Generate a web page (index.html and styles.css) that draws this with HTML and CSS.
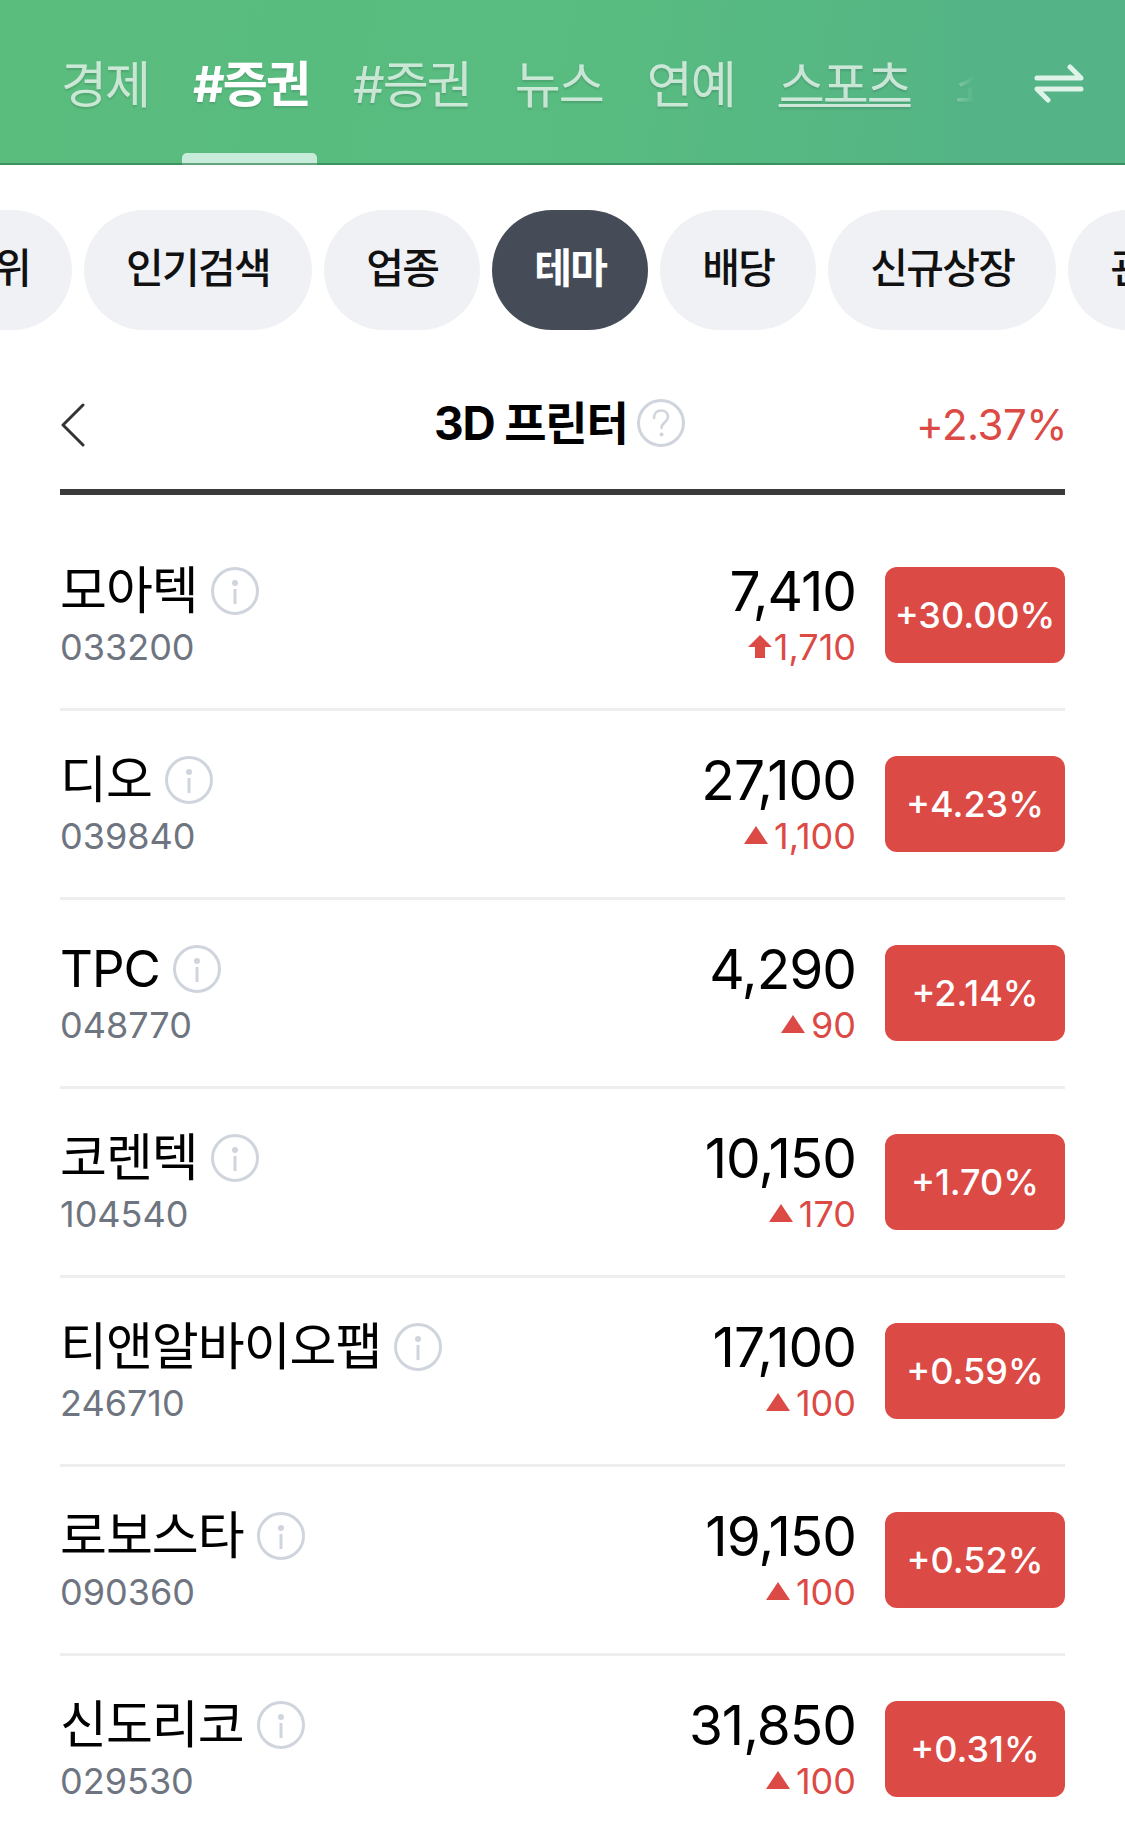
FILE: index.html
```html
<!DOCTYPE html>
<html lang="ko">
<head>
<meta charset="utf-8">
<title>3D 프린터</title>
<link rel="stylesheet" href="styles.css">
</head>
<body>
<header class="gnb">
  <nav class="gnb-tabs">
    <span class="gnb-tab">경제</span>
    <span class="gnb-tab is-active">#증권</span>
    <span class="gnb-tab">#증권</span>
    <span class="gnb-tab">뉴스</span>
    <span class="gnb-tab">연예</span>
    <span class="gnb-tab is-under">스포츠</span>
    <span class="gnb-tab">쇼핑</span>
  </nav>
  <div class="gnb-fade"></div>
  <svg class="gnb-swap" viewBox="0 0 50 40" width="50" height="40" aria-hidden="true">
    <path d="M3 15H47L36 4M47 26H3L14 37" fill="none" stroke="#dff3e8" stroke-width="5" stroke-linecap="round" stroke-linejoin="round"/>
  </svg>
</header>

<div class="pills">
  <span class="pill pill-cut">순위</span>
  <span class="pill">인기검색</span>
  <span class="pill">업종</span>
  <span class="pill is-on">테마</span>
  <span class="pill">배당</span>
  <span class="pill">신규상장</span>
  <span class="pill">관리종목</span>
</div>

<main class="panel">
  <div class="title-row">
    <svg class="back" viewBox="0 0 26 44" width="26" height="44" aria-hidden="true">
      <path d="M23 2L3 22L23 42" fill="none" stroke="#333" stroke-width="3" stroke-linecap="round" stroke-linejoin="round"/>
    </svg>
    <h1 class="title"><span>3D 프린터</span>
      <svg class="help" viewBox="0 0 48 48" width="48" height="48" aria-hidden="true">
        <circle cx="24" cy="24" r="22.5" fill="none" stroke="#d0d5dd" stroke-width="3"/>
        <path d="M17 19c0-5 3-7.500 7-7.500s7 2.500 7 6.500c0 5-6.500 5.500-6.500 11" fill="none" stroke="#d0d5dd" stroke-width="2.600" stroke-linecap="round"/>
        <circle cx="24.500" cy="35.500" r="2" fill="#d0d5dd"/>
      </svg>
    </h1>
    <span class="title-rate">+2.37%</span>
  </div>

  <ul class="stocks">
    <li class="stock">
      <div class="stock-main">
        <div class="stock-name"><span>모아텍</span><svg class="info" viewBox="0 0 48 48" width="48" height="48"><use href="#i"/></svg></div>
        <div class="stock-code">033200</div>
      </div>
      <div class="stock-price">
        <div class="price">7,410</div>
        <div class="delta"><svg class="arrow" viewBox="0 0 24 24" width="24" height="24"><path d="M12 1L24 13H17V24H7V13H0Z" fill="#dc4a45"/></svg>1,710</div>
      </div>
      <div class="badge">+30.00%</div>
    </li>
    <li class="stock">
      <div class="stock-main">
        <div class="stock-name"><span>디오</span><svg class="info" viewBox="0 0 48 48" width="48" height="48"><use href="#i"/></svg></div>
        <div class="stock-code">039840</div>
      </div>
      <div class="stock-price">
        <div class="price">27,100</div>
        <div class="delta delta-tri"><svg class="arrow" viewBox="0 0 24 18" width="24" height="18"><path d="M12 0L24 18H0Z" fill="#dc4a45"/></svg>1,100</div>
      </div>
      <div class="badge">+4.23%</div>
    </li>
    <li class="stock">
      <div class="stock-main">
        <div class="stock-name"><span>TPC</span><svg class="info" viewBox="0 0 48 48" width="48" height="48"><use href="#i"/></svg></div>
        <div class="stock-code">048770</div>
      </div>
      <div class="stock-price">
        <div class="price">4,290</div>
        <div class="delta delta-tri"><svg class="arrow" viewBox="0 0 24 18" width="24" height="18"><path d="M12 0L24 18H0Z" fill="#dc4a45"/></svg>90</div>
      </div>
      <div class="badge">+2.14%</div>
    </li>
    <li class="stock">
      <div class="stock-main">
        <div class="stock-name"><span>코렌텍</span><svg class="info" viewBox="0 0 48 48" width="48" height="48"><use href="#i"/></svg></div>
        <div class="stock-code">104540</div>
      </div>
      <div class="stock-price">
        <div class="price">10,150</div>
        <div class="delta delta-tri"><svg class="arrow" viewBox="0 0 24 18" width="24" height="18"><path d="M12 0L24 18H0Z" fill="#dc4a45"/></svg>170</div>
      </div>
      <div class="badge">+1.70%</div>
    </li>
    <li class="stock">
      <div class="stock-main">
        <div class="stock-name"><span>티앤알바이오팹</span><svg class="info" viewBox="0 0 48 48" width="48" height="48"><use href="#i"/></svg></div>
        <div class="stock-code">246710</div>
      </div>
      <div class="stock-price">
        <div class="price">17,100</div>
        <div class="delta delta-tri"><svg class="arrow" viewBox="0 0 24 18" width="24" height="18"><path d="M12 0L24 18H0Z" fill="#dc4a45"/></svg>100</div>
      </div>
      <div class="badge">+0.59%</div>
    </li>
    <li class="stock">
      <div class="stock-main">
        <div class="stock-name"><span>로보스타</span><svg class="info" viewBox="0 0 48 48" width="48" height="48"><use href="#i"/></svg></div>
        <div class="stock-code">090360</div>
      </div>
      <div class="stock-price">
        <div class="price">19,150</div>
        <div class="delta delta-tri"><svg class="arrow" viewBox="0 0 24 18" width="24" height="18"><path d="M12 0L24 18H0Z" fill="#dc4a45"/></svg>100</div>
      </div>
      <div class="badge">+0.52%</div>
    </li>
    <li class="stock">
      <div class="stock-main">
        <div class="stock-name"><span>신도리코</span><svg class="info" viewBox="0 0 48 48" width="48" height="48"><use href="#i"/></svg></div>
        <div class="stock-code">029530</div>
      </div>
      <div class="stock-price">
        <div class="price">31,850</div>
        <div class="delta delta-tri"><svg class="arrow" viewBox="0 0 24 18" width="24" height="18"><path d="M12 0L24 18H0Z" fill="#dc4a45"/></svg>100</div>
      </div>
      <div class="badge">+0.31%</div>
    </li>
  </ul>
</main>

<svg class="defs" width="0" height="0" aria-hidden="true">
  <symbol id="i" viewBox="0 0 48 48">
    <circle cx="24" cy="24" r="22.500" fill="none" stroke="#d0d5dd" stroke-width="3"/>
    <circle cx="24" cy="16" r="3" fill="#d0d5dd"/>
    <rect x="22.500" y="22" width="3" height="15" fill="#d0d5dd"/>
  </symbol>
</svg>
</body>
</html>
```
FILE: styles.css
```css
* { box-sizing: border-box; }
html, body { margin: 0; padding: 0; }
body {
  width: 1125px;
  height: 1840px;
  overflow: hidden;
  background: #fff;
  color: #000;
  font-family: Inter, "Noto Sans CJK KR", sans-serif;
}

.gnb {
  position: relative;
  height: 165px;
  overflow: hidden;
  background: linear-gradient(100deg, #5abd7e 0%, #58bb80 55%, #53b288 100%);
}
.gnb::after {
  content: "";
  position: absolute;
  left: 0;
  right: 0;
  bottom: 0;
  height: 2px;
  background: rgba(45, 125, 75, 0.65);
}
.gnb-tabs {
  display: flex;
  gap: 44px;
  padding: 50px 0 0 61px;
  white-space: nowrap;
}
.gnb-tab {
  position: relative;
  font-size: 50px;
  line-height: 70px;
  height: 70px;
  letter-spacing: -2px;
  font-weight: 400;
  color: rgba(255, 255, 255, 0.7);
  text-shadow: 0 2px 2px rgba(0, 0, 0, 0.12);
}
.gnb-tab.is-active {
  color: #fff;
  font-size: 49px;
  font-weight: 700;
}
.gnb-tab.is-active::after {
  content: "";
  position: absolute;
  left: -11px;
  right: -8px;
  top: 103px;
  height: 12px;
  background: #c8ecda;
  border-radius: 5px 5px 0 0;
}
.gnb-tab.is-under {
  text-decoration: underline;
  text-decoration-thickness: 3px;
  text-underline-offset: 1px;
}
.gnb-fade {
  position: absolute;
  top: 0;
  bottom: 2px;
  left: 945px;
  width: 180px;
  background: linear-gradient(90deg, rgba(84, 179, 135, 0.4) 0, #54b387 30px);
}
.gnb-swap {
  position: absolute;
  left: 1034px;
  top: 63px;
}

.pills {
  display: flex;
  gap: 12px;
  height: 120px;
  margin-top: 45px;
  white-space: nowrap;
  overflow: hidden;
}
.pill {
  flex: none;
  height: 120px;
  padding: 0 42px;
  border-radius: 60px;
  background: #f0f1f5;
  font-size: 41px;
  line-height: 116px;
  letter-spacing: -1.700px;
  font-weight: 500;
  text-align: center;
  color: #111;
}
.pill-cut { margin-left: -84px; }
.pill.is-on {
  background: #454c57;
  color: #fff;
  font-weight: 700;
}

.panel { padding: 0 60px; }
.title-row {
  position: relative;
  display: flex;
  align-items: center;
  justify-content: space-between;
  height: 165px;
  padding-top: 48px;
  padding-bottom: 20px;
  border-bottom: 6px solid #3a3a3a;
}
.back { display: block; margin-top: 2px; }
.title {
  position: absolute;
  left: 374px;
  top: 65px;
  display: flex;
  align-items: center;
  gap: 9px;
  margin: 0;
  font-size: 46px;
  line-height: 56px;
  letter-spacing: -1.200px;
  font-weight: 700;
}
.title-rate {
  font-size: 42px;
  line-height: 50px;
  margin-top: 2px;
  margin-right: -2px;
  color: #dc4a45;
  letter-spacing: -0.500px;
}

.stocks {
  list-style: none;
  margin: 27px 0 0;
  padding: 0;
}
.stock {
  display: flex;
  align-items: center;
  height: 189px;
  border-bottom: 3px solid #eeeeee;
}
.stock:last-child { border-bottom-color: transparent; }
.stock-main { flex: 1; min-width: 0; }
.stock-name {
  display: flex;
  align-items: center;
  gap: 13px;
  height: 60px;
  font-size: 51px;
  line-height: 60px;
  letter-spacing: -1px;
}
.stock-name .info { display: block; flex: none; margin-top: 0; }
.stock-code {
  margin-top: 4px;
  font-size: 36px;
  line-height: 44px;
  color: #6f7580;
}
.stock-price { text-align: right; }
.price {
  height: 60px;
  font-size: 55px;
  line-height: 60px;
  letter-spacing: -1px;
}
.delta {
  display: flex;
  align-items: center;
  justify-content: flex-end;
  margin-top: 4px;
  font-size: 36px;
  line-height: 44px;
  color: #dc4a45;
}
.arrow { display: block; flex: none; margin-right: 2px; margin-top: -2px; }
.delta-tri .arrow { margin-right: 6px; }
.badge {
  flex: none;
  width: 180px;
  height: 96px;
  margin-left: 29px;
  background: #dc4a45;
  border-radius: 12px;
  color: #fff;
  font-size: 36px;
  font-weight: 500;
  line-height: 96px;
  text-align: center;
}
.defs { position: absolute; }
```
